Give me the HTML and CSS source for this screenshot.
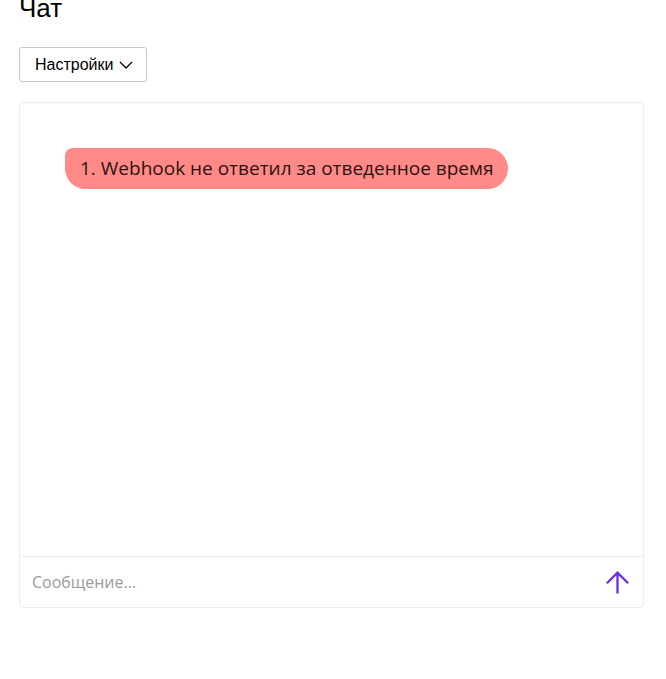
FILE: index.html
```html
<!DOCTYPE html>
<html lang="ru">
	<head>
		<meta charset="utf-8">
		<title>Чат</title>
		<link rel="stylesheet" href="styles.css">
	</head>
	<body>
		<div class="page">
			<h1 class="title">Чат</h1>
			<div class="toolbar">
				<button class="settings" type="button">
					Настройки
					<svg class="chevron" viewBox="0 0 14 8" width="14" height="8"><path d="M1 1l6 6 6-6" fill="none" stroke="currentColor" stroke-width="1.3"/></svg>
				</button>
			</div>
			<div class="chat">
				<div class="messages">
					<div class="bubble">1. Webhook не ответил за отведенное время</div>
				</div>
				<div class="composer">
					<input class="message-input" type="text" placeholder="Сообщение...">
					<button class="send" type="button" title="Отправить">
						<svg viewBox="0 0 24 24" width="25" height="25"><path d="M12 22.5V2.5M1.8 12.7L12 2.5l10.2 10.2" fill="none" stroke="currentColor" stroke-width="2.2"/></svg>
					</button>
				</div>
			</div>
		</div>
	</body>
</html>
```
FILE: styles.css
```css
html
{
	font-family: "Liberation Sans", Arial, sans-serif;
	color: #000;
}

body
{
	margin: 0;
	background: #fff;
}

.page
{
	padding: 0 22px 0 19px;
}

.title
{
	font-size: 26px;
	font-weight: normal;
	line-height: 30px;
	margin: -7px 0 0;
}

.toolbar
{
	margin-top: 24px;
}

.settings
{
	display: inline-flex;
	align-items: center;
	gap: 6px;
	height: 35px;
	padding: 0 13px 0 15px;
	border: solid 1px #c9c9c9;
	border-radius: 3px;
	background: #fff;
	font-family: "Liberation Sans", Arial, sans-serif;
	font-size: 16px;
	color: #000;
	cursor: pointer;
}

.chevron
{
	margin-top: 1px;
}

.chat
{
	margin-top: 20px;
	height: 506px;
	box-sizing: border-box;
	border: solid 1px #ececec;
	border-radius: 4px;
	display: flex;
	flex-direction: column;
}

.messages
{
	flex: 1;
	padding: 45px 45px;
	display: flex;
	flex-direction: column;
	align-items: flex-start;
}

.bubble
{
	background: #ff8a87;
	color: #2b1212;
	font-family: "Open Sans", sans-serif;
	font-size: 19px;
	line-height: 40px;
	height: 41px;
	padding: 0 15px 0 15px;
	border-radius: 8px 21px 21px 21px;
	white-space: nowrap;
}

.composer
{
	height: 50px;
	border-top: solid 1px #ededed;
	display: flex;
	align-items: center;
	padding: 0 13px 0 12px;
}

.message-input
{
	flex: 1;
	border: none;
	outline: none;
	font-family: "Open Sans", sans-serif;
	font-size: 16px;
	color: #333;
	padding: 0;
	background: transparent;
}

.message-input::placeholder
{
	color: #9a9a9a;
}

.send
{
	border: none;
	background: transparent;
	padding: 0;
	color: #6a2ee6;
	display: flex;
	cursor: pointer;
}
```
